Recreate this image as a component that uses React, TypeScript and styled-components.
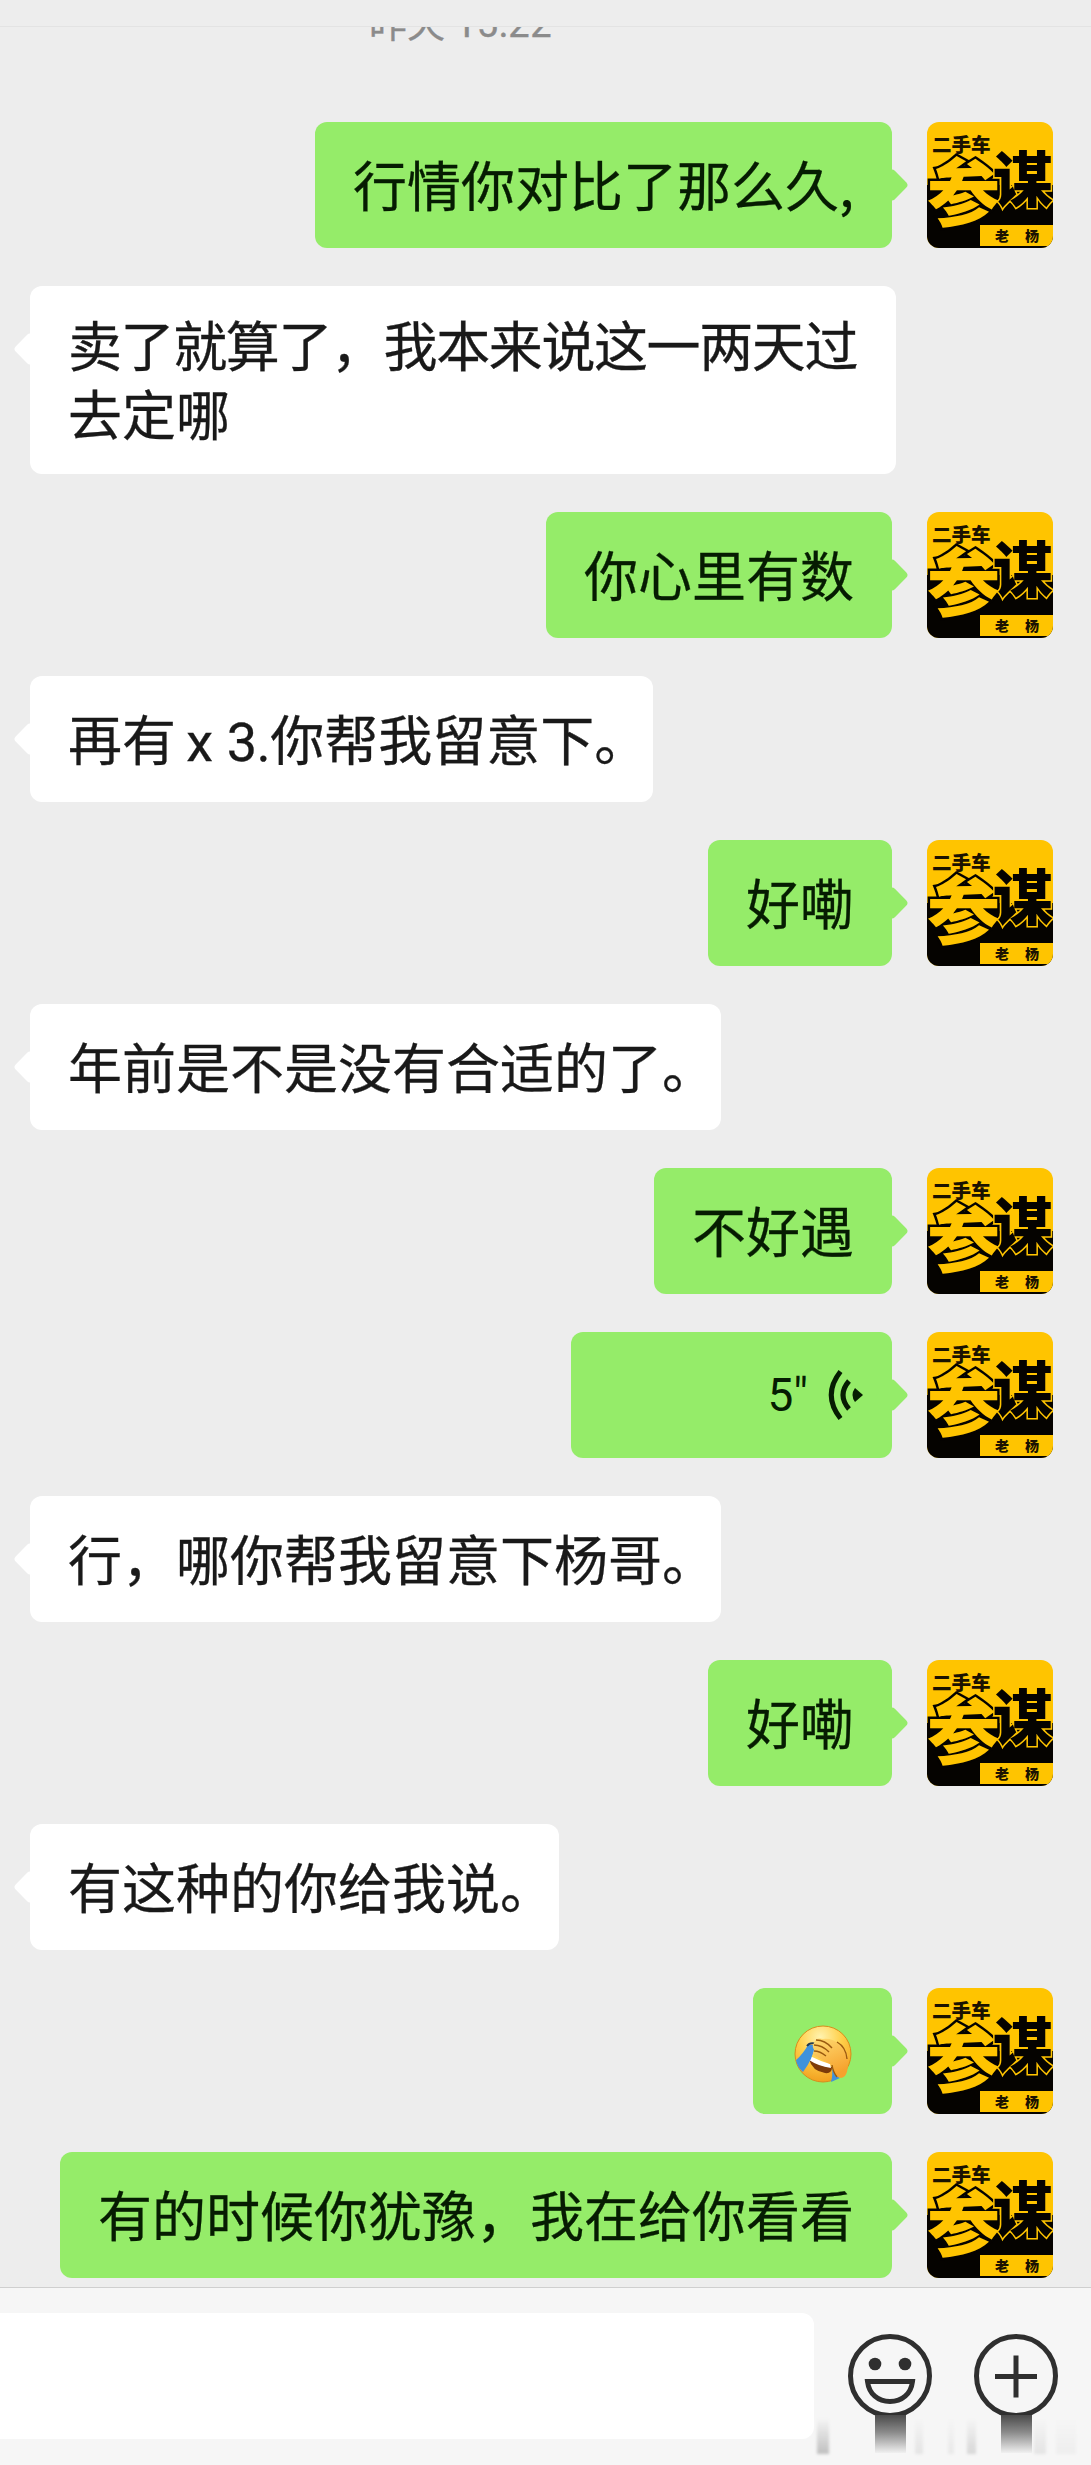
import React from 'react';
import styled, { createGlobalStyle } from 'styled-components';

type Message = {
  mine?: boolean;
  lines?: React.ReactNode[];
  kind?: 'voice' | 'emoji';
  tight?: boolean;
  trim?: boolean;
};

const AvatarArt = () => (
  <AvatarSvg viewBox='0 0 126 126'>
    <rect width='126' height='126' fill='#ffc400' />
    <rect y='63' width='126' height='63' fill='#050300' />
    <text
      x='0'
      y='98'
      fontSize='73'
      fill='#ffc400'
      stroke='#050300'
      strokeWidth='5'
      paintOrder='stroke'
    >
      参
    </text>
    <text x='5' y='30' fontSize='19.500' fill='#1a1200'>
      二手车
    </text>
    <text
      x='66'
      y='80'
      fontSize='60'
      fill='#050300'
      stroke='#ffc400'
      strokeWidth='3'
      paintOrder='stroke'
    >
      谋
    </text>
    <rect x='53' y='103' width='73' height='21' fill='#ffc400' />
    <text x='68' y='119' fontSize='14' fill='#1a1200'>
      老
    </text>
    <text x='98' y='119' fontSize='14' fill='#1a1200'>
      杨
    </text>
  </AvatarSvg>
);

const VoiceIcon = () => (
  <svg width='36' height='52' viewBox='0 0 36 52' fill='none' stroke='#061c02' strokeWidth='5'>
    <path d='M12.500 2.500Q-6 26 12.500 49.500' />
    <path d='M21 12Q9 26 21 40' />
    <path d='M27 19Q22 26 27 33L35 26Z' fill='#061c02' stroke='none' />
  </svg>
);

const FacepalmIcon = () => (
  <svg width='58' height='58' viewBox='0 0 58 58'>
    <defs>
      <radialGradient id='face' cx='0.45' cy='0.2' r='0.85'>
        <stop offset='0' stopColor='#fff3b0' />
        <stop offset='0.45' stopColor='#ffd04a' />
        <stop offset='1' stopColor='#f09a1a' />
      </radialGradient>
      <linearGradient id='hand' x2='0.4' y2='1'>
        <stop offset='0' stopColor='#ffdc73' />
        <stop offset='1' stopColor='#f6a22d' />
      </linearGradient>
    </defs>
    <circle cx='29' cy='29' r='28' fill='url(#face)' stroke='#d98c1c' />
    <path d='M15 34Q25 41 38 42Q38 49 31 48Q18 46 15 34Z' fill='#7c3b0a' />
    <path d='M16 31Q26 36 36 39L37 43Q24 41 15 35Z' fill='#fff' />
    <path d='M14 20L21 20Q19 34 9 47Q3 42 2 35Q9 29 14 20Z' fill='#3f92dc' />
    <path d='M38 41Q39 49 46 53L37 57Q39 50 38 41Z' fill='#3f92dc' />
    <path d='M13 21Q16 17 22 19' fill='none' stroke='#233a50' strokeWidth='2' />
    <path
      d='M20 18Q22 12 29 14Q38 13 45 19Q55 25 54 38Q54 52 47 53Q39 52 38 40Q30 36 21 31Q17 28 21 26Q17 21 20 18Z'
      fill='url(#hand)'
    />
    <path
      d='M22 15Q31 15 38 23M20 20Q28 20 35 27M20 26Q26 26 32 31M43 17Q52 22 53 34M38 40Q39 47 43 52'
      fill='none'
      stroke='#9a5a10'
      strokeWidth='1.400'
    />
  </svg>
);

const SmileIcon = () => (
  <svg width='84' height='84' viewBox='0 0 84 84' fill='none' stroke='#2f2f2f' strokeWidth='5'>
    <circle cx='42' cy='42' r='39.500' />
    <circle cx='27' cy='30' r='6.300' fill='#2f2f2f' stroke='none' />
    <circle cx='57' cy='30' r='6.300' fill='#2f2f2f' stroke='none' />
    <path d='M19.500 47.500H64.500C63 60 54 67.500 42 67.500S21 60 19.500 47.500Z' />
  </svg>
);

const PlusIcon = () => (
  <svg width='84' height='84' viewBox='0 0 84 84' fill='none' stroke='#2f2f2f' strokeWidth='5'>
    <circle cx='42' cy='42' r='39.500' />
    <path d='M42 21.500V63.500M21 42.500H63' />
  </svg>
);

const App = () => {
  return (
    <Screen>
      <GlobalStyle />
      <Header />
      <Chat>
        <Timestamp>
          昨天<TimeDigits> 15:22</TimeDigits>
        </Timestamp>
        {messages.map((message, index) => (
          <Row key={index} $mine={message.mine}>
            <Bubble $mine={message.mine} $kind={message.kind}>
              {message.kind === 'voice' && (
                <>
                  <Duration>5"</Duration>
                  <VoiceIcon />
                </>
              )}
              {message.kind === 'emoji' && <FacepalmIcon />}
              {message.lines?.map((line, i) => (
                <Line key={i} $tight={message.tight && i === 0} $trim={message.trim}>
                  {line}
                </Line>
              ))}
            </Bubble>
            {message.mine && <AvatarArt />}
          </Row>
        ))}
      </Chat>
      <InputBar>
        <Field />
        <IconSlot>
          <SmileIcon />
          <Drip />
        </IconSlot>
        <IconSlot>
          <PlusIcon />
          <Drip />
        </IconSlot>
        <Smudge $left={817} $width={12} $tone={0.22} />
        <Smudge $left={915} $width={8} $tone={0.07} />
        <Smudge $left={948} $width={6} $tone={0.05} />
        <Smudge $left={967} $width={9} $tone={0.12} />
        <Smudge $left={1034} $width={12} $tone={0.07} />
        <Smudge $left={1056} $width={20} $tone={0.03} />
      </InputBar>
    </Screen>
  );
};

const GlobalStyle = createGlobalStyle`
  * {
    box-sizing: border-box;
  }

  body {
    margin: 0;
    background: #ededed;
    font-family: 'Noto Sans CJK SC', sans-serif;
  }
`;

const Screen = styled.div`
  display: flex;
  flex-direction: column;
  width: 1091px;
  height: 2465px;
  overflow: hidden;
  background: #ededed;
`;

const Header = styled.header`
  flex: none;
  height: 27px;
  border-bottom: 1px solid #e3e3e3;
`;

const Chat = styled.main`
  display: flex;
  flex: none;
  flex-direction: column;
  gap: 38px;
  height: 2260px;
  overflow: hidden;
`;

const Timestamp = styled.time`
  flex: none;
  height: 79px;
  margin-top: -22px;
  padding-left: 369px;
  color: #8b8b8b;
  font-size: 38px;
  line-height: 30px;
  white-space: pre;
  -webkit-text-stroke: 0.4px;
`;

const TimeDigits = styled.span`
  font-family: Roboto, sans-serif;
  letter-spacing: 0.5px;
  line-height: 1;
`;

const Row = styled.div<{ $mine?: boolean }>`
  display: flex;
  flex: none;
  justify-content: ${({ $mine }) => ($mine ? 'flex-end' : 'flex-start')};
  gap: 35px;
  padding: 0 38px 0 30px;
`;

const bubblePadding = ({ $mine, $kind }: { $mine?: boolean; $kind?: string }) => {
  if ($kind === 'voice') return '0 28px 0 0';
  if ($kind === 'emoji') return '6px 0 0';
  return $mine ? '23px 38px 27px 38px' : '23px 39px 27px 38px';
};

const Bubble = styled.div<{ $mine?: boolean; $kind?: string }>`
  position: relative;
  display: flex;
  flex-direction: ${({ $kind }) => ($kind ? 'row' : 'column')};
  justify-content: ${({ $kind }) => ($kind === 'voice' ? 'flex-end' : 'center')};
  align-items: ${({ $kind }) => ($kind ? 'center' : 'flex-start')};
  width: ${({ $kind }) =>
    $kind === 'voice' ? '321px' : $kind === 'emoji' ? '139px' : 'auto'};
  min-height: 126px;
  padding: ${bubblePadding};
  border-radius: 12px;
  background: ${({ $mine }) => ($mine ? '#95ec69' : '#ffffff')};
  color: ${({ $mine }) => ($mine ? '#061c02' : '#191919')};

  &::before {
    content: '';
    position: absolute;
    top: 51px;
    ${({ $mine }) => ($mine ? 'right: -12px;' : 'left: -12px;')}
    width: 24px;
    height: 24px;
    border-radius: 4px;
    background: inherit;
    transform: rotate(45deg);
  }
`;

const Line = styled.span<{ $tight?: boolean; $trim?: boolean }>`
  margin-right: ${({ $trim }) => ($trim ? '-34px' : '0')};
  font-size: 54px;
  line-height: 69px;
  letter-spacing: ${({ $tight }) => ($tight ? '-1.4px' : '0')};
  white-space: pre;
  -webkit-text-stroke: 0.3px;
`;

const Latin = styled.span`
  margin-left: -4px;
  font-family: Roboto, sans-serif;
  line-height: 1;
  letter-spacing: -0.6px;
  word-spacing: 1.5px;
`;

const Duration = styled.span`
  margin-right: 20px;
  font-family: Roboto, sans-serif;
  font-size: 46px;
  line-height: 60px;
`;

const AvatarSvg = styled.svg`
  flex: none;
  width: 126px;
  height: 126px;
  border-radius: 12px;
  font-weight: 900;
`;

const InputBar = styled.footer`
  position: relative;
  display: flex;
  flex: 1;
  align-items: flex-start;
  padding-top: 25px;
  border-top: 1px solid #cfcfcf;
  background: #f6f6f6;
`;

const Field = styled.div`
  flex: none;
  width: 814px;
  height: 126px;
  margin-right: 34px;
  border-radius: 0 12px 12px 0;
  background: #ffffff;
`;

const IconSlot = styled.div`
  display: flex;
  flex: none;
  flex-direction: column;
  align-items: center;
  width: 84px;
  margin: 21px 42px 0 0;
`;

const Drip = styled.div`
  width: 31px;
  height: 38px;
  margin-top: -3px;
  background: linear-gradient(#4a4a4a, #8a8a8a 45%, #f0f0f0);
`;

const Smudge = styled.div<{ $left: number; $width: number; $tone: number }>`
  position: absolute;
  top: 130px;
  left: ${({ $left }) => $left}px;
  width: ${({ $width }) => $width}px;
  height: 36px;
  background: linear-gradient(transparent, rgba(0, 0, 0, ${({ $tone }) => $tone}));
  filter: blur(1.5px);
`;

const messages: Message[] = [
  { mine: true, lines: ['行情你对比了那么久,'] },
  { lines: ['卖了就算了，我本来说这一两天过', '去定哪'], tight: true },
  { mine: true, lines: ['你心里有数'] },
  {
    lines: [
      <>
        再有<Latin> x 3.</Latin>你帮我留意下。
      </>,
    ],
    trim: true,
  },
  { mine: true, lines: ['好嘞'] },
  { lines: ['年前是不是没有合适的了。'], trim: true },
  { mine: true, lines: ['不好遇'] },
  { mine: true, kind: 'voice' },
  { lines: ['行，哪你帮我留意下杨哥。'], trim: true },
  { mine: true, lines: ['好嘞'] },
  { lines: ['有这种的你给我说。'], trim: true },
  { mine: true, kind: 'emoji' },
  { mine: true, lines: ['有的时候你犹豫，我在给你看看'] },
];

export default App;
